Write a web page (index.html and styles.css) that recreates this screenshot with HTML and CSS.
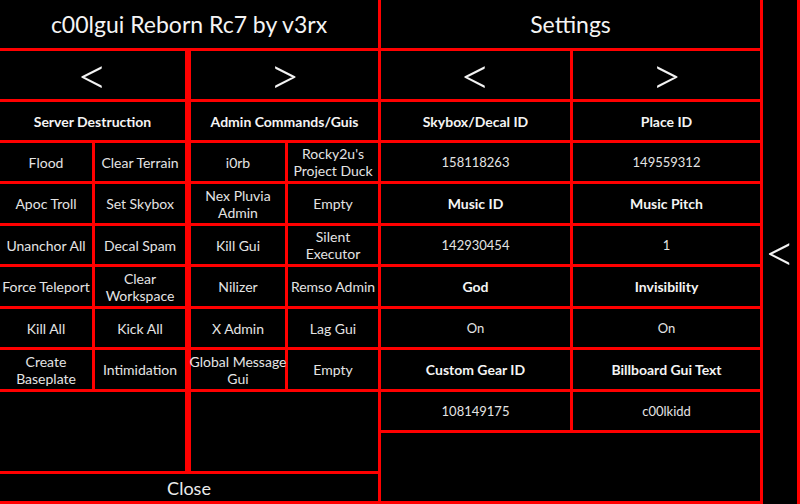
FILE: index.html
```html
<!DOCTYPE html>
<html>
<head>
<meta charset="utf-8">
<link rel="stylesheet" href="styles.css">
</head>
<body>
<div class="app">
  <div class="main">
    <div class="cell title">c00lgui Reborn Rc7 by v3rx</div>
    <div class="sections">
      <div class="section sec-a">
        <div class="cell arrow span2">&lt;</div>
        <div class="cell head span2">Server Destruction</div>
        <div class="cell btn">Flood</div>
        <div class="cell btn">Clear Terrain</div>
        <div class="cell btn">Apoc Troll</div>
        <div class="cell btn">Set Skybox</div>
        <div class="cell btn">Unanchor All</div>
        <div class="cell btn">Decal Spam</div>
        <div class="cell btn">Force Teleport</div>
        <div class="cell btn">Clear<br>Workspace</div>
        <div class="cell btn">Kill All</div>
        <div class="cell btn">Kick All</div>
        <div class="cell btn">Create<br>Baseplate</div>
        <div class="cell btn">Intimidation</div>
        <div class="cell span2"></div>
      </div>
      <div class="section sec-b">
        <div class="cell arrow span2">&gt;</div>
        <div class="cell head span2">Admin Commands/Guis</div>
        <div class="cell btn">i0rb</div>
        <div class="cell btn">Rocky2u's<br>Project Duck</div>
        <div class="cell btn">Nex Pluvia<br>Admin</div>
        <div class="cell btn">Empty</div>
        <div class="cell btn">Kill Gui</div>
        <div class="cell btn">Silent<br>Executor</div>
        <div class="cell btn">Nilizer</div>
        <div class="cell btn">Remso Admin</div>
        <div class="cell btn">X Admin</div>
        <div class="cell btn">Lag Gui</div>
        <div class="cell btn">Global Message<br>Gui</div>
        <div class="cell btn">Empty</div>
        <div class="cell span2"></div>
      </div>
    </div>
    <div class="cell close">Close</div>
  </div>
  <div class="settings">
    <div class="cell title">Settings</div>
    <div class="settings-grid">
      <div class="cell arrow">&lt;</div>
      <div class="cell arrow">&gt;</div>
      <div class="cell head">Skybox/Decal ID</div>
      <div class="cell head">Place ID</div>
      <div class="cell value">158118263</div>
      <div class="cell value">149559312</div>
      <div class="cell head">Music ID</div>
      <div class="cell head">Music Pitch</div>
      <div class="cell value">142930454</div>
      <div class="cell value">1</div>
      <div class="cell head">God</div>
      <div class="cell head">Invisibility</div>
      <div class="cell value">On</div>
      <div class="cell value">On</div>
      <div class="cell head">Custom Gear ID</div>
      <div class="cell head">Billboard Gui Text</div>
      <div class="cell value">108149175</div>
      <div class="cell value">c00lkidd</div>
      <div class="cell span2"></div>
    </div>
  </div>
  <div class="strip">&lt;</div>
</div>
</body>
</html>
```
FILE: styles.css
```css
html, body {
  margin: 0;
  padding: 0;
  background: #000;
}
body {
  font-family: "Lato", "Open Sans", sans-serif;
  color: #ececec;
}
.app {
  width: 800px;
  height: 504px;
  box-sizing: border-box;
  display: grid;
  grid-template-columns: 378px 379px 34px;
  column-gap: 3px;
  padding-right: 3px;
  background: #ff0000;
}
.main {
  display: grid;
  grid-template-rows: 48px 420px 27px;
  row-gap: 3px;
  padding-bottom: 3px;
}
.sections {
  display: grid;
  grid-template-columns: 185px 187px;
  column-gap: 6px;
}
.section {
  display: grid;
  gap: 3px;
  grid-template-rows: 48px 38px 38px 39px 38px 39px 38px 39px 79px;
}
.sec-a { grid-template-columns: 92px 90px; }
.sec-b { grid-template-columns: 94px 90px; }
.settings {
  display: grid;
  grid-template-rows: 48px 450px;
  row-gap: 3px;
  padding-bottom: 3px;
}
.settings-grid {
  display: grid;
  grid-template-columns: 189px 187px;
  gap: 3px;
  grid-template-rows: 48px 38px 38px 39px 38px 39px 38px 39px 38px 68px;
}
.cell {
  background: #000;
  display: flex;
  align-items: center;
  justify-content: center;
  text-align: center;
  white-space: nowrap;
  overflow: visible;
  min-width: 0;
}
.span2 { grid-column: span 2; }
.title {
  font-size: 23px;
  color: #f4f4f4;
}
.arrow {
  font-size: 54px;
  font-weight: 300;
  line-height: 1;
  color: #f4f4f4;
}
.head {
  font-size: 14px;
  font-weight: 700;
  color: #f4f4f4;
}
.btn {
  font-size: 14px;
  line-height: 17px;
  color: #e4e4e4;
}
.value {
  font-size: 13px;
  color: #e4e4e4;
}
.close {
  font-size: 18px;
  color: #ececec;
}
.strip {
  background: #000;
  display: flex;
  align-items: center;
  justify-content: center;
  font-size: 54px;
  font-weight: 300;
  line-height: 1;
  color: #f4f4f4;
}
```
